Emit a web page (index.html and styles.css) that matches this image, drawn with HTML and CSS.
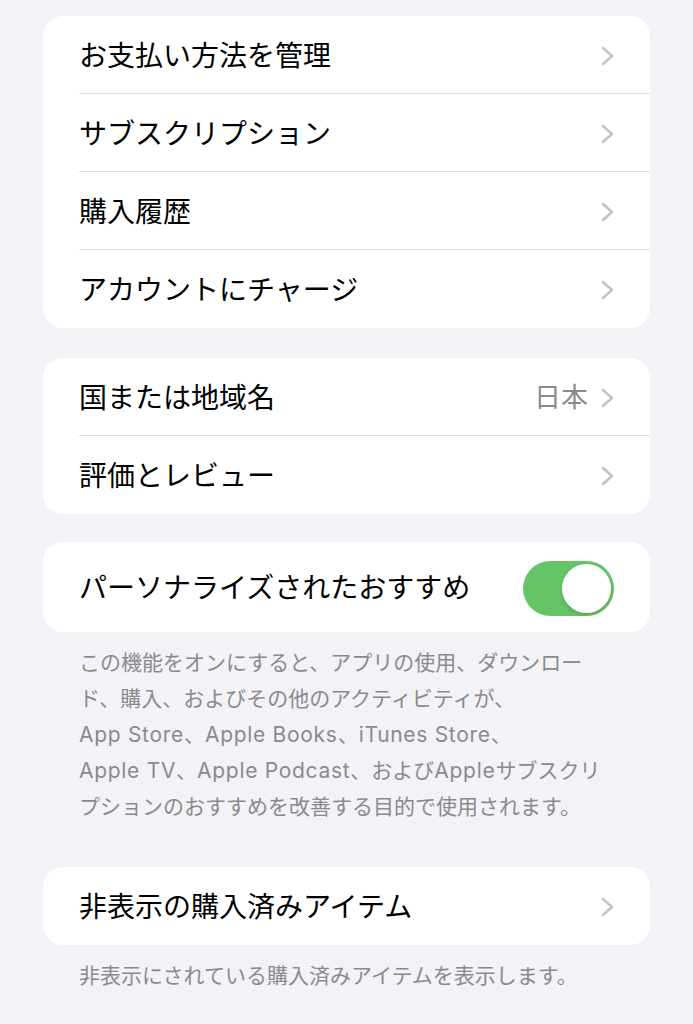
FILE: index.html
```html
<!DOCTYPE html>
<html lang="ja">
<head>
<meta charset="utf-8">
<title>設定</title>
<link rel="stylesheet" href="styles.css">
</head>
<body>
<main class="page">
  <section class="card card-gap-30">
    <div class="row"><span class="label">お支払い方法を管理</span><svg class="chev" viewBox="0 0 13 20"><path d="M2 2 L11 10 L2 18"/></svg></div>
    <div class="row"><span class="label">サブスクリプション</span><svg class="chev" viewBox="0 0 13 20"><path d="M2 2 L11 10 L2 18"/></svg></div>
    <div class="row"><span class="label">購入履歴</span><svg class="chev" viewBox="0 0 13 20"><path d="M2 2 L11 10 L2 18"/></svg></div>
    <div class="row"><span class="label">アカウントにチャージ</span><svg class="chev" viewBox="0 0 13 20"><path d="M2 2 L11 10 L2 18"/></svg></div>
  </section>

  <section class="card card-gap-28">
    <div class="row"><span class="label">国または地域名</span><span class="value">日本</span><svg class="chev" viewBox="0 0 13 20"><path d="M2 2 L11 10 L2 18"/></svg></div>
    <div class="row"><span class="label">評価とレビュー</span><svg class="chev" viewBox="0 0 13 20"><path d="M2 2 L11 10 L2 18"/></svg></div>
  </section>

  <section class="card">
    <div class="row row-tall"><span class="label">パーソナライズされたおすすめ</span><span class="toggle"><span class="knob"></span></span></div>
  </section>
  <p class="footnote footnote-gap">この機能をオンにすると、アプリの使用、ダウンロー<br>ド、購入、およびその他のアクティビティが、<br><span class="latin">App Store</span>、<span class="latin">Apple Books</span>、<span class="latin">iTunes Store</span>、<br><span class="latin">Apple TV</span>、<span class="latin">Apple Podcast</span>、および<span class="latin">Apple</span>サブスクリ<br>プションのおすすめを改善する目的で使用されます。</p>

  <section class="card">
    <div class="row"><span class="label">非表示の購入済みアイテム</span><svg class="chev" viewBox="0 0 13 20"><path d="M2 2 L11 10 L2 18"/></svg></div>
  </section>
  <p class="footnote">非表示にされている購入済みアイテムを表示します。</p>
</main>
</body>
</html>
```

FILE: styles.css
```css
html, body {
  margin: 0;
  padding: 0;
  background: #f2f2f7;
}

body {
  font-family: "Inter", "Noto Sans CJK JP", sans-serif;
  color: #000;
}

.page {
  padding: 16px 43px 0 43px;
}

.card {
  background: #fff;
  border-radius: 20px;
  overflow: hidden;
}

.card-gap-30 { margin-bottom: 30px; }
.card-gap-28 { margin-bottom: 28px; }

.row {
  display: flex;
  align-items: center;
  height: 78px;
  margin-left: 36px;
  padding-right: 36px;
  padding-top: 2px;
  border-bottom: 1px solid #e0e0e3;
  box-sizing: border-box;
}

.row:last-child {
  border-bottom: none;
}

.row-tall {
  height: 90px;
}

.label {
  flex: 1;
  font-size: 28px;
  line-height: 36px;
  white-space: nowrap;
}

.value {
  font-size: 27px;
  line-height: 36px;
  color: #8a8a8e;
  margin-right: 13px;
}

.chev {
  width: 13px;
  height: 20px;
  flex: none;
}

.chev path {
  fill: none;
  stroke: #c4c4c7;
  stroke-width: 2.6;
  stroke-linecap: round;
  stroke-linejoin: round;
}

.toggle {
  flex: none;
  width: 91px;
  height: 55px;
  border-radius: 28px;
  background: #65c466;
  display: flex;
  align-items: center;
  justify-content: flex-end;
  padding: 3px;
  box-sizing: border-box;
}

.knob {
  width: 49px;
  height: 49px;
  border-radius: 50%;
  background: #fff;
  box-shadow: 0 2px 4px rgba(0, 0, 0, 0.15);
}

.footnote {
  margin: 0;
  padding: 13px 20px 0 36px;
  font-size: 21px;
  line-height: 36px;
  color: #8a8a8e;
  white-space: nowrap;
}

.latin {
  letter-spacing: 0.7px;
}

.footnote-gap {
  margin-bottom: 42px;
}
```
